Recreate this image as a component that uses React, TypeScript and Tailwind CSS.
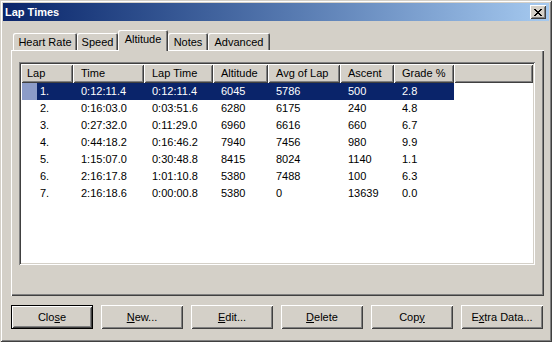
import React from 'react';

const raised =
  'shadow-[inset_1px_1px_0_#ffffff,inset_-1px_-1px_0_#404040,inset_2px_2px_0_#d4d0c8,inset_-2px_-2px_0_#808080]';

const columns = [
  { label: 'Lap', width: 'w-[52px]' },
  { label: 'Time', width: 'w-[71px]' },
  { label: 'Lap Time', width: 'w-[69px]' },
  { label: 'Altitude', width: 'w-[55px]' },
  { label: 'Avg of Lap', width: 'w-[72px]' },
  { label: 'Ascent', width: 'w-[54px]' },
  { label: 'Grade %', width: 'w-[60px]' },
];

const laps = [
  ['1.', '0:12:11.4', '0:12:11.4', '6045', '5786', '500', '2.8'],
  ['2.', '0:16:03.0', '0:03:51.6', '6280', '6175', '240', '4.8'],
  ['3.', '0:27:32.0', '0:11:29.0', '6960', '6616', '660', '6.7'],
  ['4.', '0:44:18.2', '0:16:46.2', '7940', '7456', '980', '9.9'],
  ['5.', '1:15:07.0', '0:30:48.8', '8415', '8024', '1140', '1.1'],
  ['6.', '2:16:17.8', '1:01:10.8', '5380', '7488', '100', '6.3'],
  ['7.', '2:16:18.6', '0:00:00.8', '5380', '0', '13639', '0.0'],
];

const tabs = [
  { label: 'Heart Rate', width: 'w-[64px]' },
  { label: 'Speed', width: 'w-[41px]' },
  { label: 'Altitude', width: 'w-[50px]', active: true },
  { label: 'Notes', width: 'w-[40px]' },
  { label: 'Advanced', width: 'w-[62px]' },
];

const CloseGlyph: React.FC = () => (
  <svg width="8" height="7" viewBox="0 0 8 7" shapeRendering="crispEdges">
    <path
      d="M0 0h2v1H0zM6 0h2v1H6zM1 1h2v1H1zM5 1h2v1H5zM2 2h4v1H2zM3 3h2v1H3zM2 4h4v1H2zM1 5h2v1H1zM5 5h2v1H5zM0 6h2v1H0zM6 6h2v1H6z"
      fill="#000"
    />
  </svg>
);

const Button: React.FC<{ children: React.ReactNode; isDefault?: boolean }> = ({ children, isDefault }) => (
  <div className={`w-[82px] h-[24px] bg-[#d4d0c8] ${isDefault ? 'border border-black' : ''}`}>
    <div className={`w-full h-full flex items-center justify-center text-[11px] text-black ${raised}`}>
      <span>{children}</span>
    </div>
  </div>
);

const App: React.FC = () => {
  return (
    <div className="w-[552px] h-[342px] bg-[#d4d0c8] p-[3px] flex flex-col font-['Liberation_Sans',Arial,sans-serif] shadow-[inset_1px_1px_0_#d4d0c8,inset_-1px_-1px_0_#404040,inset_2px_2px_0_#ffffff,inset_-2px_-2px_0_#808080]">
      {/* title bar */}
      <div className="h-[18px] flex items-center justify-between bg-linear-to-r from-[#0a246a] to-[#a6caf0] pl-[2px] pr-[3px]">
        <span className="text-[11px] font-bold text-white leading-none">Lap Times</span>
        <div className={`w-[16px] h-[14px] bg-[#d4d0c8] flex items-center justify-center ${raised}`}>
          <CloseGlyph />
        </div>
      </div>

      {/* tabs */}
      <div className="mt-[9px] ml-[10px] h-[20px] flex items-end">
        {tabs.map((t) =>
          t.active ? (
            <div
              key={t.label}
              className={`${t.width} h-[21px] -mb-px relative z-10 bg-[#d4d0c8] rounded-t-[2px] flex items-center justify-center pb-[2px] text-[11px] text-black shadow-[inset_1px_1px_0_#ffffff,inset_-1px_0_0_#404040,inset_-2px_0_0_#808080]`}
            >
              {t.label}
            </div>
          ) : (
            <div
              key={t.label}
              className={`${t.width} h-[17px] bg-[#d4d0c8] rounded-t-[2px] flex items-center justify-center pt-[1px] text-[11px] text-black shadow-[inset_1px_1px_0_#ffffff,inset_-1px_0_0_#404040,inset_-2px_0_0_#808080]`}
            >
              {t.label}
            </div>
          ),
        )}
      </div>

      {/* tab panel */}
      <div className="ml-[8px] mr-[5px] h-[246px] pt-[12px] pl-[8px] shadow-[inset_1px_1px_0_#ffffff,inset_-1px_-1px_0_#404040,inset_-2px_-2px_0_#808080]">
        <div className="w-[516px] h-[203px] bg-white p-[2px] shadow-[inset_1px_1px_0_#808080,inset_-1px_-1px_0_#ffffff,inset_2px_2px_0_#404040,inset_-2px_-2px_0_#d4d0c8]">
          <div className="flex h-[19px]">
            {columns.map((c, i) => (
              <div
                key={c.label}
                className={`${c.width} h-full bg-[#d4d0c8] flex items-center ${i === 0 ? 'pl-[6px]' : 'pl-[8px]'} text-[11px] text-black ${raised}`}
              >
                {c.label}
              </div>
            ))}
            <div className={`flex-1 h-full bg-[#d4d0c8] ${raised}`} />
          </div>
          {laps.map((row, r) => {
            const sel = r === 0;
            return (
              <div key={row[0]} className="flex h-[17px] text-[11px] leading-[17px]">
                <div className="w-[52px] flex">
                  <div className="w-[1px]" />
                  <div className={`w-[15px] ${sel ? 'bg-[#8c9cc8]' : ''}`} />
                  <div className={`flex-1 pl-[3px] ${sel ? 'bg-[#0a246a] text-white' : 'text-black'}`}>{row[0]}</div>
                </div>
                {row.slice(1).map((v, i) => (
                  <div
                    key={i}
                    className={`${columns[i + 1].width} pl-[8px] ${sel ? 'bg-[#0a246a] text-white' : 'text-black'}`}
                  >
                    {v}
                  </div>
                ))}
              </div>
            );
          })}
        </div>
      </div>

      {/* buttons */}
      <div className="mt-[9px] ml-[8px] flex gap-[8px]">
        <Button isDefault>
          Clo<span className="underline">s</span>e
        </Button>
        <Button>
          <span className="underline">N</span>ew...
        </Button>
        <Button>
          <span className="underline">E</span>dit...
        </Button>
        <Button>
          <span className="underline">D</span>elete
        </Button>
        <Button>
          Cop<span className="underline">y</span>
        </Button>
        <Button>
          E<span className="underline">x</span>tra Data...
        </Button>
      </div>
    </div>
  );
};

export default App;
